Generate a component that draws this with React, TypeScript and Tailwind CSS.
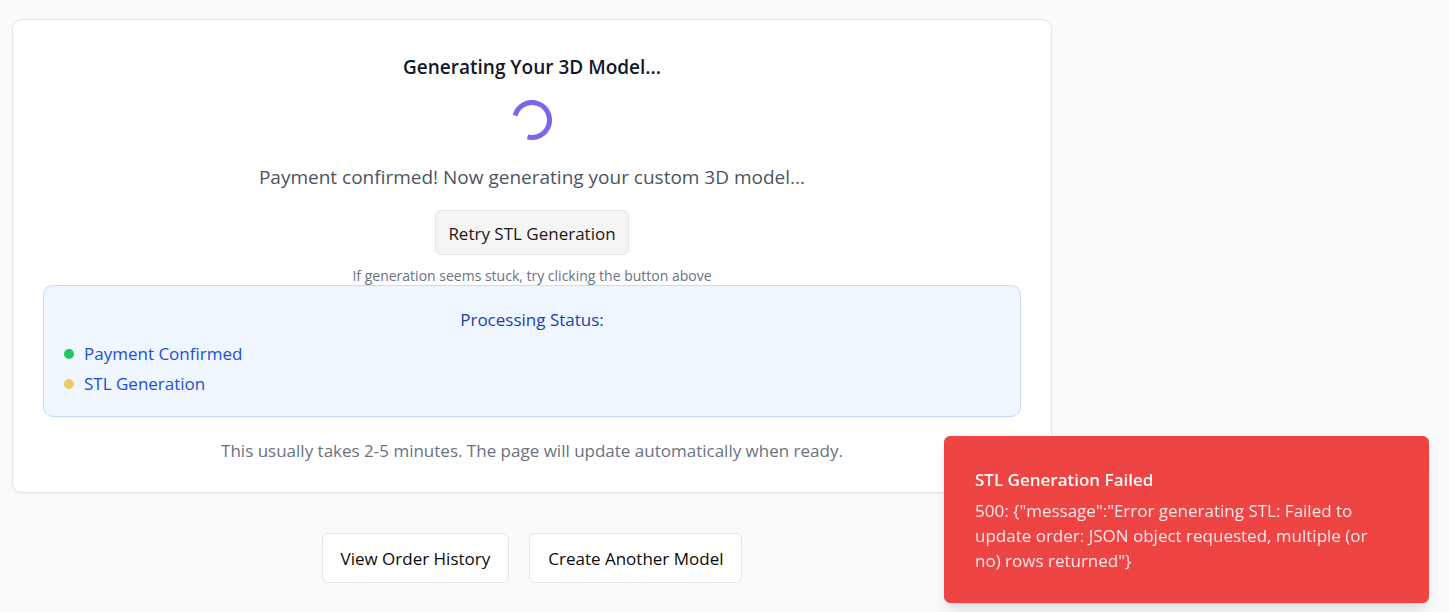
const steps = [
  { label: 'Payment Confirmed', dot: 'bg-[#22c55e]' },
  { label: 'STL Generation', dot: 'bg-[#edcb65]' },
];

function Spinner() {
  return (
    <svg className="size-10" viewBox="0 0 40 40" fill="none" role="status" aria-label="Loading">
      <path d="M3.1 15.5A17.5 17.5 0 1 1 15.5 36.9" stroke="#7b64ee" strokeWidth="5" />
    </svg>
  );
}

export default function App() {
  return (
    <div className="min-h-screen bg-[#f9fafb] px-3 pt-[19px] font-['Open_Sans','Noto_Sans',sans-serif] text-[#0c0a09]">
      <main className="w-full max-w-[1040px]">
        <section className="flex flex-col items-center rounded-[10px] border border-[#e7e5e4] bg-white px-[30px] pt-8 pb-[27px] text-center shadow-xs">
          <h1 className="text-[19px] leading-[30px] font-semibold text-[#111827]">Generating Your 3D Model...</h1>
          <div className="mt-[18px]">
            <Spinner />
          </div>
          <p className="mt-[22px] text-[19px] leading-[30px] text-[#4b5563]">
            Payment confirmed! Now generating your custom 3D model...
          </p>
          <button className="mt-[18px] h-[45px] rounded-md border border-[#e7e5e4] bg-[#f5f5f4] px-3 pt-0.5 text-[17px] leading-6 text-[#1c1917]">
            Retry STL Generation
          </button>
          <p className="mt-3 text-[14px] leading-[18px] text-[#6b7280]">
            If generation seems stuck, try clicking the button above
          </p>
          <div className="w-full rounded-[10px] border border-[#bfdbfe] bg-[#eff6ff] px-5 pt-5 pb-[19px] text-[17px]">
            <h2 className="leading-7 text-[#1e40af]">Processing Status:</h2>
            <ul className="mt-[7px] flex flex-col gap-1 text-left text-[#1d4ed8]">
              {steps.map((step) => (
                <li key={step.label} className="flex items-center gap-[10px] leading-[26px]">
                  <span className={`size-[10px] rounded-full ${step.dot}`} />
                  {step.label}
                </li>
              ))}
            </ul>
          </div>
          <p className="mt-5 text-[17px] leading-7 text-[#6b7280]">
            This usually takes 2-5 minutes. The page will update automatically when ready.
          </p>
        </section>
        <nav className="mt-10 flex justify-center gap-5 text-[17px]">
          <button className="h-[50px] rounded-md border border-[#e7e5e4] bg-white px-[18px] pt-0.5">
            View Order History
          </button>
          <button className="h-[50px] rounded-md border border-[#e7e5e4] bg-white px-[18px] pt-0.5">
            Create Another Model
          </button>
        </nav>
      </main>
      <div
        role="alert"
        className="fixed right-5 bottom-[9px] w-[485px] rounded-md border border-[#ef4444] bg-[#ef4444] px-[30px] pt-[30px] pb-[29px] text-[17px] text-[#fafaf9] shadow-lg"
      >
        <h2 className="leading-[26px] font-semibold">STL Generation Failed</h2>
        <p className="mt-[5px] pr-5 leading-[25px] opacity-90">
          {'500: {"message":"Error generating STL: Failed to update order: JSON object requested, multiple (or no) rows returned"}'}
        </p>
      </div>
    </div>
  );
}
